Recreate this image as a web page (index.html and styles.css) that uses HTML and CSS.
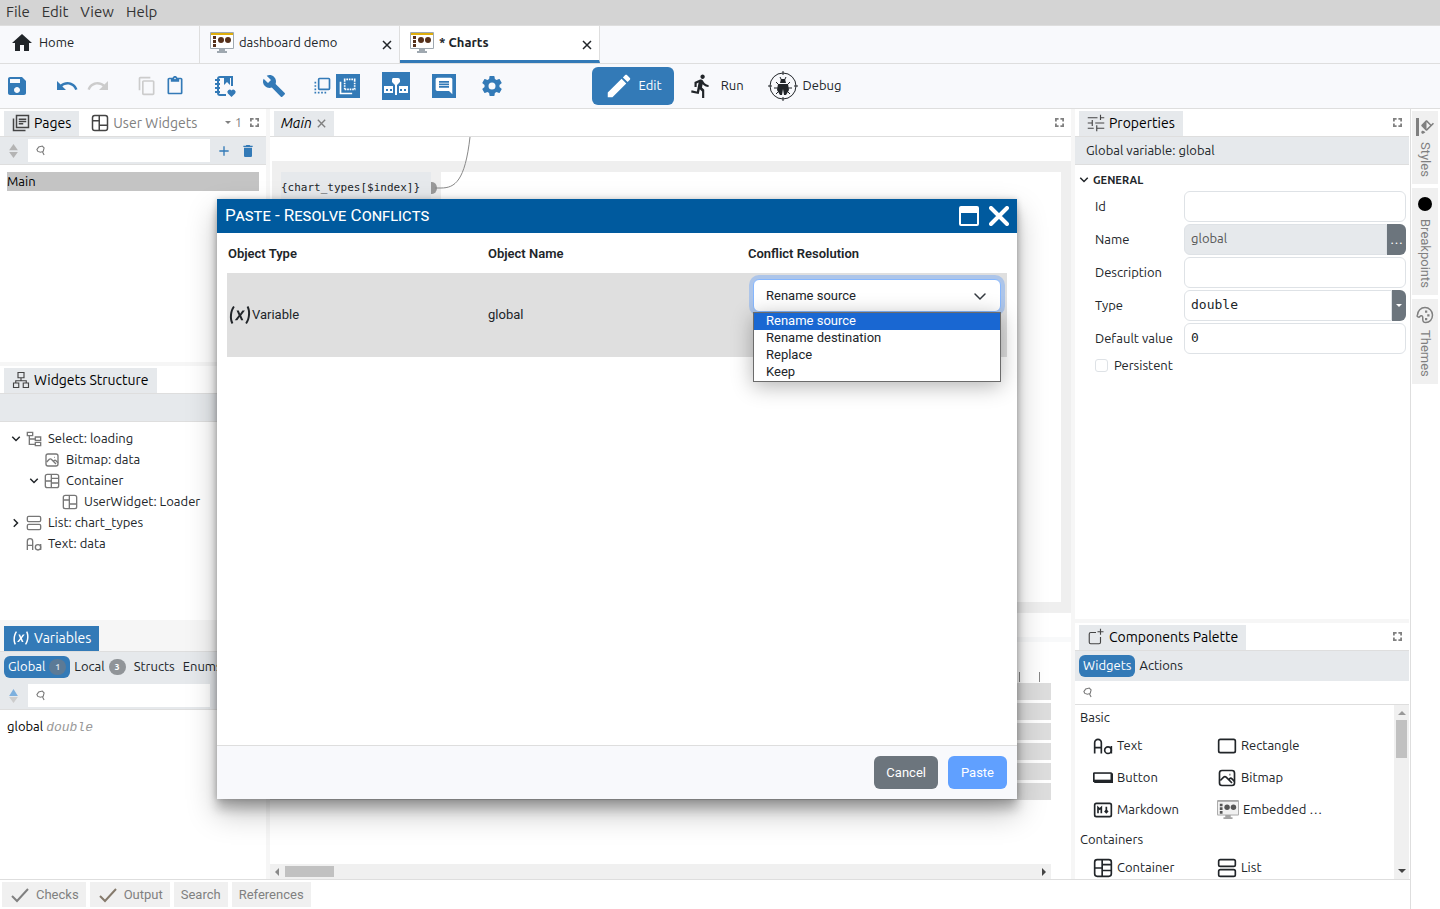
FILE: index.html
```html
<!DOCTYPE html>
<html lang="en">
<head>
    <meta charset="UTF-8">
    <title>Charts</title>
    <link rel="stylesheet" href="styles.css">
</head>
<body>
<!-- shared icons -->
<svg class="sprite" aria-hidden="true">
    <symbol id="home" viewBox="0 0 24 24"><path fill="currentColor" d="M10 20v-6h4v6h5v-8h3L12 3 2 12h3v8z"/></symbol>
    <symbol id="save" viewBox="0 0 24 24"><path fill="currentColor" d="M17 3H5c-1.11 0-2 .9-2 2v14c0 1.1.89 2 2 2h14c1.1 0 2-.9 2-2V7l-4-4zm-5 16c-1.66 0-3-1.34-3-3s1.34-3 3-3 3 1.34 3 3-1.34 3-3 3zm3-10H5V5h10v4z"/></symbol>
    <symbol id="undo" viewBox="0 0 24 24"><path fill="currentColor" d="M12.5 8c-2.65 0-5.05.99-6.9 2.6L2 7v9h9l-3.62-3.62c1.39-1.16 3.16-1.88 5.12-1.88 3.54 0 6.55 2.31 7.6 5.5l2.37-.78C21.08 11.03 17.15 8 12.5 8z"/></symbol>
    <symbol id="redo" viewBox="0 0 24 24"><path fill="currentColor" d="M18.4 10.6C16.55 8.99 14.15 8 11.5 8c-4.65 0-8.58 3.03-9.96 7.22L3.9 16c1.05-3.19 4.05-5.5 7.6-5.5 1.95 0 3.73.72 5.12 1.88L13 16h9V7l-3.6 3.6z"/></symbol>
    <symbol id="copy" viewBox="0 0 24 24"><path fill="currentColor" d="M16 1H4c-1.1 0-2 .9-2 2v14h2V3h12V1zm3 4H8c-1.1 0-2 .9-2 2v14c0 1.1.9 2 2 2h11c1.1 0 2-.9 2-2V7c0-1.1-.9-2-2-2zm0 16H8V7h11v14z"/></symbol>
    <symbol id="paste" viewBox="0 0 24 24"><path fill="currentColor" d="M19 2h-4.18C14.4.84 13.3 0 12 0c-1.3 0-2.4.84-2.82 2H5c-1.1 0-2 .9-2 2v16c0 1.1.9 2 2 2h14c1.1 0 2-.9 2-2V4c0-1.1-.9-2-2-2zm-7 0c.55 0 1 .45 1 1s-.45 1-1 1-1-.45-1-1 .45-1 1-1zm7 18H5V4h2v3h10V4h2v16z"/></symbol>
    <symbol id="library" viewBox="0 0 24 24"><path fill="none" stroke="currentColor" stroke-width="2" d="M13 21H7a2 2 0 0 1-2-2V5a2 2 0 0 1 2-2h12v9M2 6h5M2 10h5M2 14h5M2 18h5"/><path fill="currentColor" d="M11 3h6v8l-3-3-3 3zM18.500 23l-3.600-3.600a2.300 2.300 0 1 1 3.600-2.900a2.300 2.300 0 1 1 3.600 2.900z"/></symbol>
    <symbol id="wrench" viewBox="0 0 24 24"><path fill="currentColor" d="M22.7 19l-9.1-9.1c.9-2.3.4-5-1.500-6.900-2-2-5-2.400-7.400-1.300L9 6 6 9 1.600 4.700C.4 7.100.9 10.100 2.900 12.100c1.900 1.900 4.600 2.400 6.900 1.500l9.100 9.100c.4.4 1 .4 1.400 0l2.300-2.300c.5-.4.5-1.100.1-1.400z"/></symbol>
    <symbol id="front" viewBox="0 0 24 24"><rect x="8" y="3" width="13" height="13" rx="1" fill="none" stroke="currentColor" stroke-width="2"/><path fill="currentColor" d="M3 7h2v2H3zM3 11h2v2H3zM3 15h2v2H3zM3 19h2v2H3zM7 19h2v2H7zM11 19h2v2h-2zM15 19h2v2h-2z"/></symbol>
    <symbol id="back" viewBox="0 0 24 24"><path fill="none" stroke="currentColor" stroke-width="2" d="M3 7v14h14"/><path fill="none" stroke="currentColor" stroke-width="2" stroke-dasharray="2 1" d="M7 4h14M8 16h13M8 5v11M20 5v11"/></symbol>
    <symbol id="rail" viewBox="0 0 28 28"><path fill="currentColor" d="M11 6h5a2 2 0 0 1 2 2v2l-3 3v10h-2V13l-3-3V8a2 2 0 0 1 1-2zM2 14h9v7H2zM17 14h9v7h-9z"/><path stroke="#337ab7" stroke-width="2" stroke-dasharray="2 2" d="M4 18h6M18 18h7"/></symbol>
    <symbol id="comment" viewBox="0 0 24 24"><path fill="currentColor" d="M21.990 4c0-1.100-.89-2-1.990-2H4c-1.100 0-2 .9-2 2v12c0 1.100.9 2 2 2h14l4 4-.01-18zM18 14H6v-2h12v2zm0-3H6V9h12v2zm0-3H6V6h12v2z"/></symbol>
    <symbol id="cog" viewBox="0 0 24 24"><path fill="currentColor" d="M12 15.5A3.5 3.5 0 0 1 8.5 12 3.5 3.5 0 0 1 12 8.5a3.5 3.5 0 0 1 3.5 3.5 3.5 3.5 0 0 1-3.5 3.5m7.43-2.53c.04-.32.07-.64.07-.97 0-.33-.03-.66-.07-1l2.11-1.63c.19-.15.24-.42.12-.64l-2-3.46c-.12-.22-.39-.31-.61-.22l-2.49 1c-.52-.39-1.06-.73-1.69-.98l-.37-2.65A.506.506 0 0 0 14 2h-4c-.25 0-.46.18-.5.42l-.37 2.65c-.63.25-1.17.59-1.69.98l-2.49-1c-.22-.09-.49 0-.61.22l-2 3.46c-.13.22-.07.49.12.64L4.57 11c-.04.34-.07.67-.07 1 0 .33.03.65.07.97l-2.110 1.660c-.19.15-.25.42-.12.64l2 3.460c.12.22.39.3.61.22l2.490-1.010c.52.4 1.060.74 1.690.99l.37 2.650c.04.24.25.42.5.42h4c.25 0 .46-.18.5-.42l.37-2.650c.63-.26 1.170-.59 1.690-.99l2.490 1.010c.22.08.49 0 .61-.22l2-3.460c.12-.22.07-.49-.12-.64l-2.110-1.660Z"/></symbol>
    <symbol id="pencil" viewBox="0 0 24 24"><path fill="currentColor" d="M20.71 7.040C21.100 6.650 21.100 6 20.710 5.630L18.370 3.290C18 2.900 17.350 2.900 16.960 3.290L15.120 5.120L18.870 8.870M3 17.250V21H6.750L17.810 9.930L14.060 6.180L3 17.250Z"/></symbol>
    <symbol id="run" viewBox="0 0 24 24"><path fill="currentColor" d="M13.490 5.480c1.100 0 2-.9 2-2s-.9-2-2-2-2 .9-2 2 .9 2 2 2zm-3.600 13.900l1-4.400 2.100 2v6h2v-7.500l-2.100-2 .6-3c1.300 1.500 3.300 2.500 5.500 2.500v-2c-1.900 0-3.500-1-4.300-2.400l-1-1.600c-.4-.6-1-1-1.700-1-.3 0-.5.1-.8.1l-5.200 2.200v4.700h2v-3.400l1.800-.7-1.600 8.100-4.900-1-.4 2 7 1.400z"/></symbol>
    <symbol id="debug" viewBox="0 0 30 30"><circle cx="15" cy="15" r="13" fill="none" stroke="currentColor"/><path stroke="currentColor" fill="none" d="M15 0v4M15 26v4M0 15h4M26 15h4M12 6l2 4M18 6l-2 4M11 14l-3-3M19 14l3-3M10 17H6M20 17h4M11 20l-3 3M19 20l3 3"/><path fill="currentColor" d="M13 8h4l1 4h-6zM10 13h10l1 6-3 5h-2l-1-6-1 6h-2l-3-5z"/></symbol>
    <symbol id="monitor" viewBox="0 0 24 22"><path fill="#9fa8b0" d="M1 0h22a1 1 0 0 1 1 1v15a1 1 0 0 1-1 1h-8v2h2v2H7v-2h2v-2H1a1 1 0 0 1-1-1V1a1 1 0 0 1 1-1z"/><path fill="#fff" d="M1 3h22v13H1z"/><path fill="#dfae0c" d="M1 1h22v2H1z"/><path fill="#56301a" d="M3 4h3v3H3zM3 8h3v3H3zM3 12h3v3H3z"/><circle cx="11" cy="8" r="3" fill="#56301a"/><circle cx="18" cy="8" r="3" fill="#56301a"/></symbol>
    <symbol id="monitor-gray" viewBox="0 0 24 22"><path fill="#a5a5a5" d="M1 0h22a1 1 0 0 1 1 1v15a1 1 0 0 1-1 1h-8v2h2v2H7v-2h2v-2H1a1 1 0 0 1-1-1V1a1 1 0 0 1 1-1z"/><path fill="#f1f1f1" d="M1 2h22v14H1z"/><path fill="#555" d="M3 4h3v3H3zM3 8h3v3H3zM3 12h3v3H3z"/><circle cx="11" cy="8" r="3" fill="#555"/><circle cx="18" cy="8" r="3" fill="#555"/></symbol>
    <symbol id="close" viewBox="0 0 12 12"><path fill="none" stroke="currentColor" stroke-width="1.500" d="M2 2l8 8M10 2l-8 8"/></symbol>
    <symbol id="pages" viewBox="0 0 24 24"><path fill="none" stroke="currentColor" stroke-width="2" d="M6 2h16v16H6zM2 6v16h16M9 7h10M9 10h10M9 13h6"/></symbol>
    <symbol id="layout" viewBox="0 0 24 24"><g fill="none" stroke="currentColor" stroke-width="2"><rect x="2" y="2" width="20" height="20" rx="3"/><path d="M11 2v20M2 9h9M11 15h11"/></g></symbol>
    <symbol id="grid" viewBox="0 0 24 24"><g fill="none" stroke="currentColor" stroke-width="2"><rect x="2" y="2" width="20" height="20" rx="3"/><path d="M11 2v20M2 12h9M11 8h11M11 15h11"/></g></symbol>
    <symbol id="list" viewBox="0 0 24 24"><g fill="none" stroke="currentColor" stroke-width="2"><rect x="2" y="2" width="20" height="8" rx="2"/><rect x="2" y="14" width="20" height="8" rx="2"/></g></symbol>
    <symbol id="image" viewBox="0 0 24 24"><g fill="none" stroke="currentColor" stroke-width="2"><rect x="3" y="3" width="18" height="18" rx="3"/><path d="M4 15l4-4c1-1 2-1 3 0l7 7M14 14l1-1c1-1 2-1 3 0l3 3M15 8h1"/></g></symbol>
    <symbol id="letters" viewBox="0 0 24 24"><g fill="none" stroke="currentColor" stroke-width="2"><path d="M2 21V8a4 4 0 0 1 8 0v13M2 14h8M22 12v9"/><circle cx="18" cy="17" r="4"/></g></symbol>
    <symbol id="markdown" viewBox="0 0 24 24"><g fill="none" stroke="currentColor" stroke-width="2"><rect x="2" y="4" width="20" height="16" rx="2"/><path d="M6 16V9l2 2 2-2v7M14 13l2 2 2-2M16 15V8"/></g></symbol>
    <symbol id="select" viewBox="0 0 24 24"><path fill="none" stroke="currentColor" stroke-width="2" d="M2 2h8v5H2zM14 9h8v5h-8zM14 17h8v5h-8zM5 7v13h9M5 12h9"/></symbol>
    <symbol id="hierarchy" viewBox="0 0 24 24"><path fill="none" stroke="currentColor" stroke-width="1.500" d="M8 2h8v7H8zM2 16h7v6H2zM15 16h7v6h-7zM12 9v4M5 16v-3h14v3"/></symbol>
    <symbol id="rect" viewBox="0 0 24 24"><rect x="2" y="4" width="20" height="16" rx="2" fill="none" stroke="currentColor" stroke-width="2"/></symbol>
    <symbol id="button" viewBox="0 0 24 24"><path fill="currentColor" d="M1 5h21l2 2v11H2l-2-2V6z"/><path fill="#fff" d="M2 7h19v7H2z"/></symbol>
    <symbol id="variable" viewBox="0 0 24 24"><path fill="currentColor" d="M20.410 3C21.800 5.710 22.350 8.840 22 12C21.800 15.160 20.700 18.290 18.830 21L17.300 20C18.910 17.570 19.850 14.800 20 12C20.340 9.200 19.890 6.430 18.700 4L20.410 3M5.170 3L6.700 4C5.090 6.430 4.150 9.200 4 12C3.660 14.800 4.120 17.570 5.300 20L3.610 21C2.210 18.290 1.650 15.170 2 12C2.200 8.840 3.300 5.710 5.170 3M12.080 10.680L14.400 7.450H16.930L13.150 12.450L15.350 17.370H13.090L11.710 14L9.280 17.330H6.760L10.660 12.210L8.530 7.450H10.800L12.080 10.680Z"/></symbol>
    <symbol id="tune" viewBox="0 0 24 24"><path fill="none" stroke="currentColor" stroke-width="1.500" d="M1 5h13M18 5h5M18 1v7M1 12h6M7 8v8M11 12h12M1 19h8M13 15v8M13 19h10"/></symbol>
    <symbol id="add-box" viewBox="0 0 24 24"><path fill="none" stroke="currentColor" stroke-width="1.500" d="M12 6H5a2 2 0 0 0-2 2v11a2 2 0 0 0 2 2h11a2 2 0 0 0 2-2v-7M18 1v8M14 5h8"/></symbol>
    <symbol id="expand" viewBox="0 0 10 10"><path fill="none" stroke="currentColor" stroke-width="2" d="M1 4V1h3M6 1h3v3M9 6v3H6M4 9H1V6"/></symbol>
    <symbol id="search" viewBox="0 0 10 12"><path fill="none" stroke="currentColor" stroke-width="1.200" d="M1 5L3 2l4-1 2 2-1 4-3 1-3-1zM7 7l2 4"/></symbol>
    <symbol id="sort" viewBox="0 0 10 16"><path d="M5 0l5 7H0z"/><path d="M0 9h10l-5 7z"/></symbol>
    <symbol id="sort-asc" viewBox="0 0 10 16"><path fill="#7db0de" d="M5 0l5 8H0z"/><path fill="#ccc" d="M0 9h10l-5 7z"/></symbol>
    <symbol id="plus" viewBox="0 0 24 24"><path stroke="currentColor" stroke-width="2" d="M12 5v14M5 12h14"/></symbol>
    <symbol id="trash" viewBox="0 0 24 24"><path fill="currentColor" d="M6 19c0 1.100.9 2 2 2h8c1.100 0 2-.9 2-2V7H6v12zM19 4h-3.500l-1-1h-5l-1 1H5v2h14V4z"/></symbol>
    <symbol id="chevron" viewBox="0 0 16 16"><path fill="none" stroke="currentColor" stroke-width="2" d="M3 5l5 5 5-5"/></symbol>
    <symbol id="check" viewBox="0 0 20 16"><path fill="none" stroke="currentColor" stroke-width="2" d="M2 9l5 5L18 2"/></symbol>
    <symbol id="fill" viewBox="0 0 24 24"><path fill="currentColor" d="M16.560 8.940L7.620 0 6.210 1.410l2.380 2.380-5.150 5.150c-.59.59-.59 1.540 0 2.120l5.500 5.500c.29.29.68.44 1.060.44s.77-.15 1.060-.44l5.500-5.500c.59-.58.59-1.530 0-2.120zM5.210 10L10 5.210 14.790 10H5.210zM19 11.500s-2 2.170-2 3.500c0 1.100.9 2 2 2s2-.9 2-2c0-1.330-2-3.500-2-3.500zM0 20h24v4H0z"/></symbol>
    <symbol id="palette" viewBox="0 0 24 24"><path fill="none" stroke="currentColor" stroke-width="2" d="M12 22a10 10 0 0 1 0-20c6 0 10 4 10 9 0 2.200-2 4-4.500 4H15a2 2 0 0 0-1 3.750A1.300 1.300 0 0 1 12 22"/><path fill="currentColor" d="M6 9h3v3H6zM11 6h3v3h-3zM16 9h3v3h-3z"/></symbol>
</svg>

<nav class="menubar">
    <button>File</button>
    <button>Edit</button>
    <button>View</button>
    <button>Help</button>
</nav>

<div class="doc-tabs">
    <div class="doc-tab"><svg class="icon-home"><use href="#home"/></svg><span>Home</span></div>
    <div class="doc-tab"><svg class="icon-monitor"><use href="#monitor"/></svg><span>dashboard demo</span><button class="doc-close" aria-label="Close"><svg><use href="#close"/></svg></button></div>
    <div class="doc-tab doc-tab-active"><svg class="icon-monitor"><use href="#monitor"/></svg><span>* Charts</span><button class="doc-close" aria-label="Close"><svg><use href="#close"/></svg></button></div>
</div>

<div class="toolbar">
    <div class="toolbar-left">
        <button class="tool" aria-label="Save"><svg><use href="#save"/></svg></button>
        <div class="tool-pair">
            <button class="tool tool-wide" aria-label="Undo"><svg><use href="#undo"/></svg></button>
            <button class="tool tool-wide" aria-label="Redo" disabled><svg><use href="#redo"/></svg></button>
        </div>
        <div class="tool-pair">
            <button class="tool" aria-label="Copy" disabled><svg class="small"><use href="#copy"/></svg></button>
            <button class="tool" aria-label="Paste"><svg class="small"><use href="#paste"/></svg></button>
        </div>
        <button class="tool tool-wide" aria-label="Libraries"><svg><use href="#library"/></svg></button>
        <button class="tool" aria-label="Build"><svg><use href="#wrench"/></svg></button>
        <div class="tool-views">
            <div class="tool-toggle">
                <button class="tool" aria-label="Front face"><svg class="small"><use href="#front"/></svg></button>
                <button class="tool tool-on" aria-label="Back face"><svg class="small"><use href="#back"/></svg></button>
            </div>
            <button class="tool tool-big tool-on" aria-label="Timeline"><svg><use href="#rail"/></svg></button>
            <button class="tool tool-on" aria-label="Comments"><svg class="small"><use href="#comment"/></svg></button>
            <button class="tool tool-big" aria-label="Settings"><svg class="gear"><use href="#cog"/></svg></button>
        </div>
    </div>
    <div class="modes">
        <button class="mode mode-active"><svg><use href="#pencil"/></svg>Edit</button>
        <button class="mode"><svg><use href="#run"/></svg>Run</button>
        <button class="mode"><svg><use href="#debug"/></svg>Debug</button>
    </div>
    <div class="toolbar-right"></div>
</div>

<div class="workspace">
    <div class="main">
        <div class="columns">
            <aside class="left">
                <section class="panel pages-panel">
                    <header class="panel-head">
                        <div class="panel-tab panel-tab-on"><svg><use href="#pages"/></svg>Pages</div>
                        <div class="panel-tab"><svg><use href="#layout"/></svg>User Widgets</div>
                        <div class="panel-tools"><i class="caret"></i><span>1</span><svg><use href="#expand"/></svg></div>
                    </header>
                    <div class="filter">
                        <svg class="sort"><use href="#sort"/></svg>
                        <label class="search"><svg><use href="#search"/></svg><input type="text" aria-label="Search pages"></label>
                        <button class="filter-btn" aria-label="Add"><svg><use href="#plus"/></svg></button>
                        <button class="filter-btn" aria-label="Delete"><svg><use href="#trash"/></svg></button>
                    </div>
                    <div class="page-list"><div class="page-item">Main</div></div>
                </section>
                <div class="split-h"></div>
                <section class="panel structure-panel">
                    <header class="panel-head">
                        <div class="panel-tab panel-tab-on"><svg><use href="#hierarchy"/></svg>Widgets Structure</div>
                    </header>
                    <div class="filter"></div>
                    <ul class="tree">
                        <li><svg class="chev"><use href="#chevron"/></svg><svg class="node"><use href="#select"/></svg>Select: loading</li>
                        <li class="depth-1"><svg class="node"><use href="#image"/></svg>Bitmap: data</li>
                        <li class="depth-1"><svg class="chev"><use href="#chevron"/></svg><svg class="node"><use href="#grid"/></svg>Container</li>
                        <li class="depth-2"><svg class="node"><use href="#layout"/></svg>UserWidget: Loader</li>
                        <li><svg class="chev chev-closed"><use href="#chevron"/></svg><svg class="node"><use href="#list"/></svg>List: chart_types</li>
                        <li><svg class="node"><use href="#letters"/></svg>Text: data</li>
                    </ul>
                </section>
                <div class="split-h"></div>
                <section class="panel variables-panel">
                    <header class="panel-head panel-head-active">
                        <div class="panel-tab panel-tab-blue"><svg><use href="#variable"/></svg>Variables</div>
                    </header>
                    <div class="pills">
                        <button class="pill pill-on">Global <span class="badge">1</span></button>
                        <button class="pill">Local <span class="badge">3</span></button>
                        <button class="pill">Structs</button>
                        <button class="pill">Enums</button>
                    </div>
                    <div class="filter">
                        <svg class="sort"><use href="#sort-asc"/></svg>
                        <label class="search"><svg><use href="#search"/></svg><input type="text" aria-label="Search variables"></label>
                    </div>
                    <div class="variable">global <em>double</em></div>
                </section>
            </aside>
            <div class="split-v"></div>

            <main class="center">
                <header class="panel-head">
                    <div class="panel-tab panel-tab-on editor-tab">Main<svg><use href="#close"/></svg></div>
                    <div class="panel-tools"><svg><use href="#expand"/></svg></div>
                </header>
                <div class="canvas">
                    <div class="canvas-page"></div>
                    <div class="flow-node">{chart_types[$index]}</div>
                    <svg class="flow-line" viewBox="0 0 50 60"><path fill="#999" d="M10 45h1a5 6 0 0 1 0 12h-1z"/><path fill="none" stroke="#888" d="M14 51h6C34 51 44 44 49 0"/></svg>
                </div>
                <div class="timeline-bar"></div>
                <div class="timeline">
                    <div class="ticks"><i></i><i></i></div>
                    <div class="track"></div>
                    <div class="track"></div>
                    <div class="track"></div>
                    <div class="track"></div>
                    <div class="track"></div>
                    <div class="track"></div>
                </div>
                <div class="hscroll"><i class="arrow-left"></i><span class="hthumb"></span><i class="arrow-right"></i></div>
            </main>
            <div class="split-v"></div>

            <aside class="right">
                <section class="panel props-panel">
                    <header class="panel-head">
                        <div class="panel-tab panel-tab-on"><svg><use href="#tune"/></svg>Properties</div>
                        <div class="panel-tools"><svg><use href="#expand"/></svg></div>
                    </header>
                    <div class="props-title">Global variable: global</div>
                    <form class="props">
                        <h3><svg><use href="#chevron"/></svg>GENERAL</h3>
                        <div class="prop"><label for="p-id">Id</label><div class="field"><input id="p-id" type="text"></div></div>
                        <div class="prop"><label for="p-name">Name</label><div class="field"><input id="p-name" class="readonly" type="text" value="global" readonly><button type="button" class="more">…</button></div></div>
                        <div class="prop"><label for="p-desc">Description</label><div class="field"><input id="p-desc" type="text"></div></div>
                        <div class="prop"><label for="p-type">Type</label><div class="field"><input id="p-type" class="code" type="text" value="double"><button type="button" class="drop" aria-label="Select type"><i class="caret"></i></button></div></div>
                        <div class="prop"><label for="p-def">Default value</label><div class="field"><input id="p-def" class="code" type="text" value="0"></div></div>
                        <label class="tick"><input type="checkbox">Persistent</label>
                    </form>
                </section>
                <div class="split-h"></div>
                <section class="panel palette-panel">
                    <header class="panel-head">
                        <div class="panel-tab panel-tab-on"><svg><use href="#add-box"/></svg>Components Palette</div>
                        <div class="panel-tools"><svg><use href="#expand"/></svg></div>
                    </header>
                    <div class="pills">
                        <button class="pill pill-on">Widgets</button>
                        <button class="pill">Actions</button>
                    </div>
                    <label class="search palette-search"><svg><use href="#search"/></svg><input type="text" aria-label="Search components"></label>
                    <div class="palette-body">
                        <div class="palette-list">
                            <h4>Basic</h4>
                            <div class="palette-grid">
                                <div><svg><use href="#letters"/></svg>Text</div>
                                <div><svg><use href="#rect"/></svg>Rectangle</div>
                                <div><svg><use href="#button"/></svg>Button</div>
                                <div><svg><use href="#image"/></svg>Bitmap</div>
                                <div><svg><use href="#markdown"/></svg>Markdown</div>
                                <div><svg class="embedded"><use href="#monitor-gray"/></svg>Embedded …</div>
                            </div>
                            <h4>Containers</h4>
                            <div class="palette-grid">
                                <div><svg><use href="#grid"/></svg>Container</div>
                                <div><svg><use href="#list"/></svg>List</div>
                            </div>
                        </div>
                        <div class="vscroll"><i class="arrow-up"></i><span class="vthumb"></span><i class="arrow-down"></i></div>
                    </div>
                </section>
            </aside>
        </div>
        <footer class="bottom-tabs">
            <button><svg><use href="#check"/></svg>Checks</button>
            <button><svg class="warn"><use href="#check"/></svg>Output</button>
            <button>Search</button>
            <button>References</button>
        </footer>
    </div>
    <nav class="side-tabs">
        <button><svg><use href="#fill"/></svg>Styles</button>
        <button><i class="dot"></i>Breakpoints</button>
        <button><svg><use href="#palette"/></svg>Themes</button>
    </nav>
</div>

<div class="dialog" role="dialog" aria-labelledby="dialog-title">
    <div class="dialog-title">
        <h2 id="dialog-title">Paste - Resolve Conflicts</h2>
        <button aria-label="Maximize"><svg viewBox="0 0 20 20"><path fill="#fff" fill-rule="evenodd" d="M2 0h16a2 2 0 0 1 2 2v16a2 2 0 0 1-2 2H2a2 2 0 0 1-2-2V2a2 2 0 0 1 2-2zM2 7v11h16V7z"/></svg></button>
        <button aria-label="Close"><svg viewBox="0 0 20 20"><path stroke="#fff" stroke-width="4" stroke-linecap="round" d="M2 2l16 16M18 2L2 18"/></svg></button>
    </div>
    <div class="dialog-body">
        <table>
            <thead>
                <tr><th>Object Type</th><th>Object Name</th><th>Conflict Resolution</th></tr>
            </thead>
            <tbody>
                <tr>
                    <td><div class="object-type"><svg><use href="#variable"/></svg>Variable</div></td>
                    <td>global</td>
                    <td class="resolution">
                        <div class="combo">
                            <select aria-label="Conflict Resolution">
                                <option>Rename source</option>
                                <option>Rename destination</option>
                                <option>Replace</option>
                                <option>Keep</option>
                            </select>
                            <svg viewBox="0 0 16 16"><path fill="none" stroke="#343a40" stroke-width="1.500" stroke-linecap="round" d="M3 6l5 5 5-5"/></svg>
                            <ul class="options">
                                <li class="selected">Rename source</li>
                                <li>Rename destination</li>
                                <li>Replace</li>
                                <li>Keep</li>
                            </ul>
                        </div>
                    </td>
                </tr>
            </tbody>
        </table>
    </div>
    <div class="dialog-footer">
        <button class="btn btn-cancel">Cancel</button>
        <button class="btn btn-paste">Paste</button>
    </div>
</div>
</body>
</html>
```
FILE: styles.css
```css
*{
    box-sizing: border-box;
}
html,body{
    height: 100%;
    margin: 0;
    overflow: hidden;
}
body{
    display: flex;
    flex-direction: column;
    position: relative;
    background: #fff;
    color: #212529;
    font: 13px/1.5 Ubuntu, "Noto Sans", sans-serif;
}
button,input,select{
    font: inherit;
    color: inherit;
}
button{
    border: 0;
    padding: 0;
    background: none;
    white-space: nowrap;
}
h2,h3,h4,ul{
    margin: 0;
    padding: 0;
    list-style: none;
}
svg{
    display: block;
    flex: none;
}
.sprite{
    position: absolute;
    width: 0;
    height: 0;
}
/* menu */
.menubar{
    flex: none;
    display: flex;
    gap: 12px;
    height: 26px;
    padding: 0 6px;
    background: #d4d4d4;
    border-bottom: 1px solid #dedede;
    font-size: 15px;
    color: #333;
}
/* document tabs */
.doc-tabs{
    flex: none;
    display: flex;
    height: 38px;
    background: #f8f9fc;
    border-bottom: 1px solid #dedede;
}
.doc-tab{
    display: flex;
    align-items: center;
    gap: 5px;
    width: 200px;
    padding: 0 6px 4px 10px;
    border-right: 1px solid #dedede;
}
.doc-tab-active{
    background: #fff;
    border-bottom: 3px solid #337ab7;
    padding-bottom: 1px;
    font-weight: bold;
}
.icon-home{
    width: 24px;
    height: 24px;
}
.icon-monitor{
    width: 24px;
    height: 22px;
}
.doc-close{
    margin-left: auto;
    padding-top: 5px;
}
.doc-close svg{
    width: 12px;
    height: 12px;
}
/* toolbar */
.toolbar{
    flex: none;
    display: flex;
    align-items: center;
    height: 45px;
    background: #f8f9fc;
    border-bottom: 1px solid #dedede;
}
.toolbar-left,.toolbar-right{
    flex: 1 1 0;
}
.toolbar-left{
    display: flex;
    align-items: center;
    gap: 24px;
    padding-left: 5px;
}
.tool-pair{
    display: flex;
    gap: 4px;
}
.tool-toggle{
    display: flex;
    gap: 2px;
}
.tool-views{
    display: flex;
    align-items: center;
    gap: 22px;
}
.tool{
    display: flex;
    align-items: center;
    justify-content: center;
    width: 24px;
    height: 24px;
    color: #337ab7;
}
.tool:disabled{
    color: #ccc;
}
.tool svg{
    width: 24px;
    height: 24px;
}
.tool .small{
    width: 20px;
    height: 20px;
}
.tool-wide{
    width: 27px;
}
.tool-big{
    width: 28px;
    height: 28px;
}
.tool-big svg{
    width: 28px;
    height: 28px;
}
.tool-big .gear{
    width: 24px;
    height: 24px;
}
.tool-on{
    background: #337ab7;
    color: #fff;
}
.modes{
    display: flex;
}
.mode{
    display: flex;
    align-items: center;
    gap: 5px;
    height: 38px;
    padding: 0 12px;
    border-radius: 6px;
}
.mode svg{
    width: 30px;
    height: 30px;
}
.mode:nth-child(2) svg{
    padding: 2px;
}
.mode-active{
    background: #337ab7;
    color: #fff;
}
/* workspace */
.workspace{
    flex: 1;
    display: flex;
    min-height: 0;
}
.main{
    flex: 1;
    display: flex;
    flex-direction: column;
    min-width: 0;
}
.columns{
    flex: 1;
    display: flex;
    min-height: 0;
}
.left{
    width: 266px;
    display: flex;
    flex-direction: column;
}
.center{
    flex: 1;
    display: flex;
    flex-direction: column;
    min-width: 0;
}
.right{
    width: 335px;
    padding-right: 1px;
    display: flex;
    flex-direction: column;
}
.split-v{
    width: 4px;
    background: #f6f6f6;
}
.split-h{
    height: 4px;
    flex: none;
    background: #f6f6f6;
}
.panel{
    display: flex;
    flex-direction: column;
    min-height: 0;
    overflow: hidden;
}
.pages-panel{
    flex: 253 1 0;
}
.structure-panel{
    flex: 254 1 0;
}
.variables-panel{
    flex: 255 1 0;
}
.props-panel{
    flex: 510 1 0;
}
.palette-panel{
    flex: 256 1 0;
}
.panel-head{
    flex: none;
    display: flex;
    gap: 4px;
    height: 28px;
    padding: 2px 4px 0;
    border-bottom: 1px solid #dedede;
}
.panel-head-active{
    background: #f6f6f6;
}
.panel-tab{
    display: flex;
    align-items: center;
    gap: 4px;
    padding: 0 8px 1px;
    font-size: 14px;
    color: #808080;
    white-space: nowrap;
}
.panel-tab svg{
    width: 18px;
    height: 18px;
    color: #444;
}
.panel-tab-on{
    background: #e6e9ec;
    color: #000;
}
.panel-tab-blue,.panel-tab-blue svg{
    background: #337ab7;
    color: #fff;
}
.panel-tools{
    display: flex;
    align-items: center;
    gap: 4px;
    margin-left: auto;
    padding: 0 3px 2px 0;
    color: #808080;
}
.panel-tools svg{
    width: 9px;
    height: 9px;
    margin-left: 4px;
}
.caret{
    border: 3px solid transparent;
    border-top-color: currentColor;
    border-bottom: 0;
}
.filter{
    flex: none;
    display: flex;
    align-items: center;
    height: 28px;
    background: #e6e9ec;
    border-bottom: 1px solid #dedede;
}
.sort{
    width: 9px;
    height: 14px;
    margin: 0 10px 0 9px;
    fill: #b4b4b4;
}
.search{
    display: flex;
    align-items: center;
    gap: 4px;
    width: 182px;
    height: 23px;
    padding-left: 8px;
    background: #fff;
}
.search svg{
    width: 9px;
    height: 11px;
    color: #777;
}
.search input{
    flex: 1;
    min-width: 0;
    border: 0;
    padding: 0;
    background: none;
}
.filter-btn{
    width: 24px;
    padding-left: 6px;
    color: #337ab7;
}
.filter-btn svg{
    width: 16px;
    height: 16px;
}
.page-list{
    padding: 7px;
}
.page-item{
    height: 19px;
    line-height: 19px;
    background: #c4c4c4;
    color: #000;
}
/* widgets tree */
.tree{
    padding: 7px 8px;
}
.tree li{
    display: flex;
    align-items: center;
    gap: 6px;
    height: 21px;
    padding: 0 0 1px 18px;
    white-space: nowrap;
}
.tree .depth-1{
    padding-left: 36px;
}
.tree .depth-2{
    padding-left: 54px;
}
.node{
    width: 16px;
    height: 16px;
    color: #777;
}
.chev{
    width: 12px;
    height: 12px;
    margin: 0 -2px 0 -16px;
}
.chev-closed{
    transform: rotate(-90deg);
}
/* variables */
.pills{
    flex: none;
    display: flex;
    align-items: center;
    height: 30px;
    padding: 0 4px;
    background: #e6e9ec;
}
.pill{
    display: flex;
    align-items: center;
    gap: 4px;
    height: 22px;
    padding: 0 4px 1px;
    border-radius: 6px;
}
.pill-on{
    background: #337ab7;
    color: #fff;
}
.badge{
    min-width: 17px;
    height: 16px;
    line-height: 16px;
    border-radius: 8px;
    background: #909498;
    color: #fff;
    font-size: 9px;
    font-weight: bold;
    text-align: center;
}
.pill-on .badge{
    background: #5c7a96;
    color: #d4dce4;
}
.variable{
    padding: 7px;
    color: #000;
}
.variable em{
    font-family: "Liberation Mono", monospace;
    color: #999;
}
/* page editor */
.editor-tab{
    padding: 0 7px 1px;
    font-style: italic;
}
.editor-tab svg{
    width: 11px;
    height: 11px;
    color: #808080;
}
.canvas{
    position: relative;
    flex: 451 1 0;
    margin-left: 2px;
    border-top: 24px solid #fff;
    background: #efefef;
}
.canvas-page{
    position: absolute;
    top: 11px;
    right: 10px;
    bottom: 10px;
    left: 169px;
    background: #fff;
}
.flow-node{
    position: absolute;
    left: 9px;
    top: 11px;
    width: 150px;
    height: 32px;
    line-height: 32px;
    background: #e6e9ec;
    font-family: "DejaVu Sans Mono", monospace;
    font-size: 11px;
}
.flow-line{
    position: absolute;
    left: 149px;
    top: -24px;
    width: 50px;
    height: 60px;
}
.timeline-bar{
    height: 30px;
    border-top: 1px solid #f0f0f0;
    border-bottom: 5px solid #f8f9fa;
}
.timeline{
    flex: 222 1 0;
    margin-right: 20px;
}
.ticks{
    display: flex;
    justify-content: flex-end;
    gap: 19px;
    height: 41px;
    padding: 30px 11px 0 0;
}
.ticks i{
    width: 1px;
    height: 10px;
    background: #888;
}
.track{
    height: 17px;
    margin-bottom: 3px;
    background: #ddd;
}
.hscroll{
    flex: none;
    display: flex;
    align-items: center;
    height: 15px;
    margin-right: 20px;
    padding: 0 5px;
    background: #f0f0f0;
}
.hthumb{
    width: 49px;
    height: 11px;
    margin: 0 auto 0 6px;
    background: #c1c1c1;
}
.arrow-left,.arrow-right,.arrow-up,.arrow-down{
    border: 4px solid transparent;
}
.arrow-left{
    border-right-color: #888;
    border-left: 0;
}
.arrow-right{
    border-left-color: #444;
    border-right: 0;
}
.arrow-up{
    border-bottom-color: #999;
    border-top: 0;
}
.arrow-down{
    border-top-color: #444;
    border-bottom: 0;
}
/* properties */
.props-title{
    flex: none;
    height: 28px;
    line-height: 27px;
    padding: 0 11px;
    background: #e6e9ec;
    border-bottom: 1px solid #dedede;
}
.props{
    padding: 4px 3px;
}
.props h3{
    display: flex;
    align-items: center;
    gap: 3px;
    height: 22px;
    font-size: 11px;
}
.props h3 svg{
    width: 12px;
    height: 12px;
}
.prop{
    display: flex;
    align-items: center;
    margin-bottom: 2px;
    padding-left: 17px;
}
.prop label{
    width: 89px;
    white-space: nowrap;
}
.field{
    flex: 1;
    display: flex;
    height: 31px;
}
.field input{
    flex: 1;
    min-width: 0;
    padding: 0 6px 1px;
    border: 1px solid #dee2e6;
    border-radius: 6px;
    background: #fff;
}
.field .readonly{
    background: #e6e9ec;
    color: #555;
}
.field .code{
    font-family: "DejaVu Sans Mono", monospace;
}
.field input:not(:last-child){
    border-radius: 6px 0 0 6px;
}
.more,.drop{
    width: 19px;
    border-radius: 0 6px 6px 0;
    background: #6c757d;
    color: #fff;
}
.drop{
    width: 14px;
    display: flex;
    align-items: center;
    justify-content: center;
}
.tick{
    display: flex;
    align-items: center;
    gap: 6px;
    padding-left: 17px;
}
.tick input{
    appearance: none;
    width: 13px;
    height: 13px;
    margin: 0;
    border: 1px solid #dee2e6;
    border-radius: 3px;
}
/* components palette */
.palette-search{
    flex: none;
    width: auto;
    height: 24px;
    border-bottom: 1px solid #dedede;
}
.palette-body{
    flex: 1;
    display: flex;
    min-height: 0;
}
.palette-list{
    flex: 1;
    overflow: hidden;
}
.palette-list h4{
    padding: 2px 5px;
    font-size: 13px;
    font-weight: normal;
    line-height: 20px;
}
.palette-grid{
    display: grid;
    grid-template-columns: 124px 124px;
    padding: 1px 0 1px 18px;
}
.palette-grid div{
    display: flex;
    align-items: center;
    gap: 4px;
    height: 32px;
    white-space: nowrap;
}
.palette-grid svg{
    width: 20px;
    height: 20px;
}
.palette-grid .embedded{
    width: 22px;
}
.vscroll{
    display: flex;
    flex-direction: column;
    align-items: center;
    width: 15px;
    padding: 6px 0;
    background: #f0f0f0;
}
.vthumb{
    width: 11px;
    height: 38px;
    margin: 5px 0 auto;
    background: #c1c1c1;
}
/* bottom and side tabs */
.bottom-tabs{
    flex: none;
    display: flex;
    gap: 4px;
    height: 30px;
    padding: 2px;
    border-top: 1px solid #dedede;
    font-family: Roboto, sans-serif;
    color: #808080;
}
.bottom-tabs button{
    display: flex;
    align-items: center;
    gap: 6px;
    height: 25px;
    padding: 0 7px;
    background: #f0f0f0;
}
.bottom-tabs svg{
    width: 20px;
    height: 16px;
    margin-left: 1px;
}
.warn{
    color: #857a6c;
}
.side-tabs{
    display: flex;
    flex-direction: column;
    gap: 4px;
    width: 30px;
    padding: 2px 2px 2px 1px;
    border-left: 1px solid #dedede;
    font-family: Roboto, sans-serif;
    color: #808080;
}
.side-tabs button{
    display: flex;
    align-items: center;
    gap: 6px;
    padding: 7px 0;
    writing-mode: vertical-rl;
    background: #f0f0f0;
}
.side-tabs svg{
    width: 18px;
    height: 18px;
    transform: rotate(90deg);
}
.dot{
    width: 14px;
    height: 14px;
    margin: 2px;
    border-radius: 50%;
    background: #000;
}
/* dialog */
.dialog{
    position: absolute;
    left: 217px;
    top: 199px;
    display: flex;
    flex-direction: column;
    width: 800px;
    height: 600px;
    background: #fff;
    box-shadow: 0 0 6px rgba(0,0,0,.2), 0 14px 28px rgba(0,0,0,.25), 0 10px 10px rgba(0,0,0,.22);
    font-family: Roboto, sans-serif;
}
.dialog-title{
    display: flex;
    align-items: center;
    gap: 10px;
    height: 34px;
    padding: 0 8px;
    background: #005a9e;
    color: #fff;
}
.dialog-title h2{
    flex: 1;
    font-size: 17px;
    font-weight: normal;
    font-variant: small-caps;
}
.dialog-title svg{
    width: 20px;
    height: 20px;
}
.dialog-body{
    flex: 1;
    padding: 0 10px;
}
.dialog table{
    width: 100%;
    table-layout: fixed;
    border-collapse: collapse;
}
.dialog th{
    height: 40px;
    padding: 1px 1px 0;
    font-weight: 600;
    text-align: left;
}
.dialog td{
    height: 84px;
    padding: 0 1px;
    background: #dfdfdf;
}
.object-type{
    display: flex;
    align-items: center;
}
.object-type svg{
    width: 24px;
    height: 24px;
}
.dialog .resolution{
    padding: 6px;
    vertical-align: top;
}
.combo{
    position: relative;
}
.combo select{
    display: block;
    width: 100%;
    height: 33px;
    padding: 0 12px;
    appearance: none;
    background: #fff;
    border: 1px solid #86b7fe;
    border-radius: 6px;
    box-shadow: 0 0 0 4px #adc5e9;
}
.combo > svg{
    position: absolute;
    right: 13px;
    top: 9px;
    width: 16px;
    height: 16px;
}
.options{
    position: absolute;
    top: 33px;
    left: 0;
    right: 0;
    border: 1px solid #6b6b6b;
    background: #fff;
    box-shadow: 0 4px 20px rgba(0,0,0,.3);
}
.options li{
    height: 17px;
    padding: 0 12px;
    line-height: 16px;
}
.options .selected{
    background: #1967d2;
    color: #fff;
}
.dialog-footer{
    display: flex;
    justify-content: flex-end;
    gap: 10px;
    padding: 10px;
    border-top: 1px solid #dedede;
    background: #f8f9fc;
}
.btn{
    height: 33px;
    padding: 0 13px;
    border-radius: 6px;
    color: #fff;
}
.btn-cancel{
    padding: 0 12px;
    background: #6c757d;
}
.btn-paste{
    background: #60a0ff;
}
```
